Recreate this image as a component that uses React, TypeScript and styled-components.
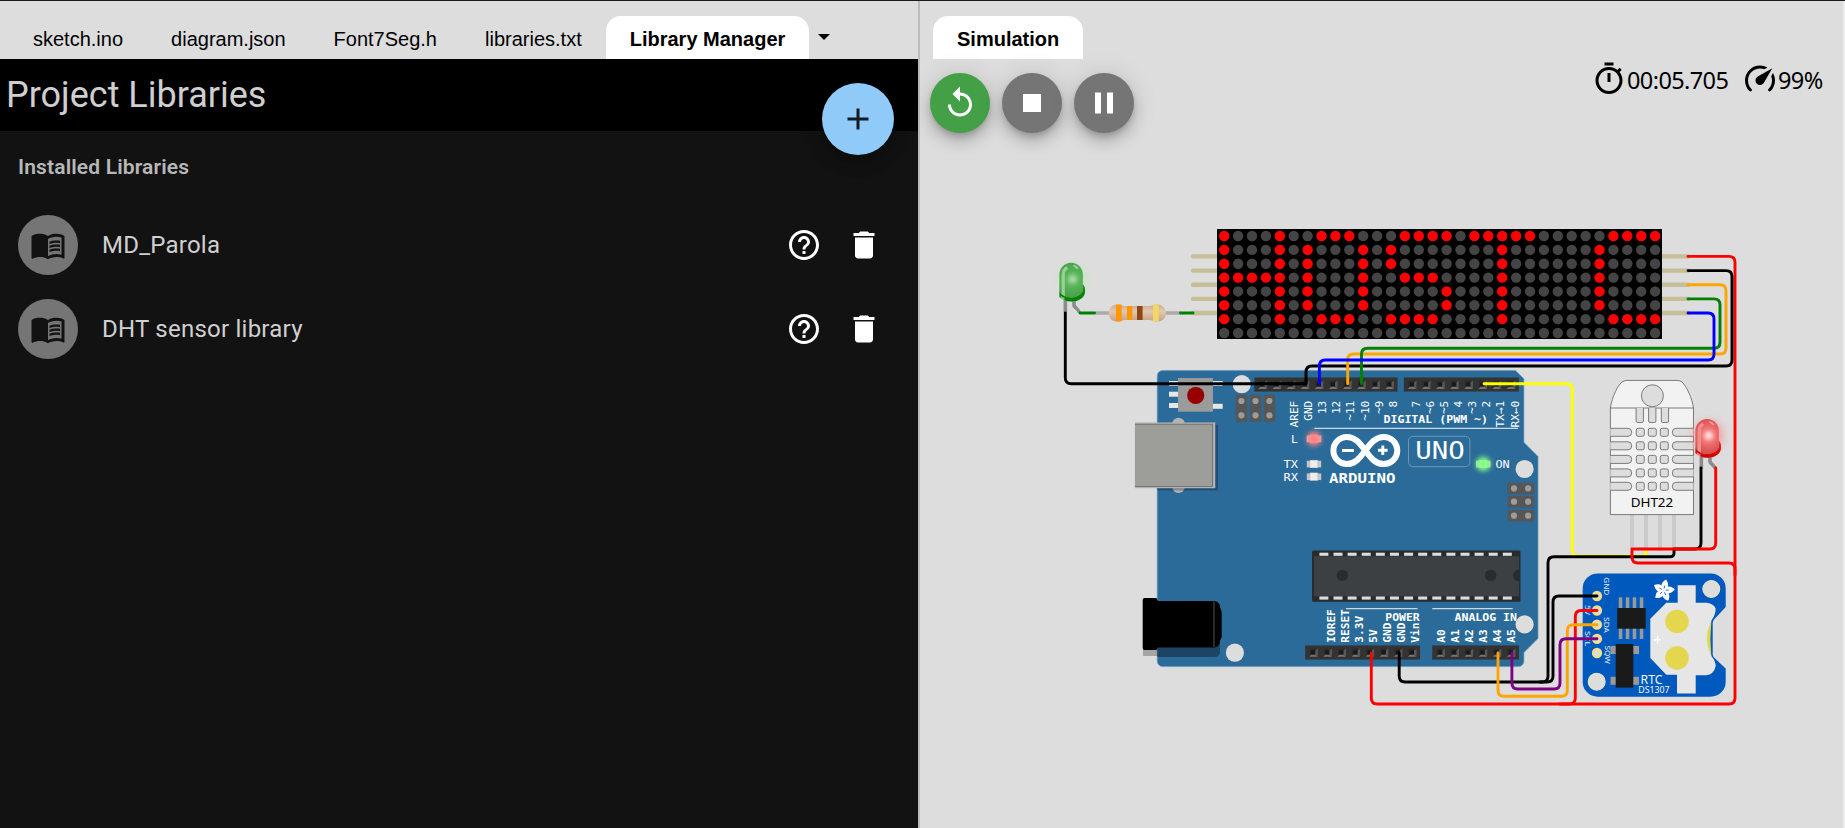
import React from 'react';
import styled, { createGlobalStyle } from 'styled-components';

const GlobalStyle = createGlobalStyle`
  * { box-sizing: border-box; }
  html, body { margin: 0; padding: 0; overflow: hidden; background: #ddd; }
`;

const Page = styled.div`
  display: flex;
  width: 1845px;
  height: 828px;
  border-top: 1px solid #1c181c;
  background: #ddd;
  overflow: hidden;
`;

const EditorPane = styled.section`
  display: flex;
  flex-direction: column;
  flex: 0 0 918px;
`;

const Divider = styled.div`
  flex: 0 0 2px;
  background: #bcbcbc;
`;

const SimulationPane = styled.section`
  display: flex;
  flex-direction: column;
  flex: 0 0 923px;
`;

const EdgeStrip = styled.div`
  flex: 1;
  background: #ececec;
`;

const TabBar = styled.nav<{ $inset: number }>`
  display: flex;
  align-items: flex-end;
  height: 58px;
  flex: none;
  padding-left: ${(p) => p.$inset}px;
  background: #ddd;
`;

const Tab = styled.div<{ $active?: boolean }>`
  height: 43px;
  padding: 0 24px;
  border-radius: 15px 15px 0 0;
  font: ${(p) => (p.$active ? 700 : 400)} 20px/46px 'Liberation Sans', Arial, sans-serif;
  color: #000;
  background: ${(p) => (p.$active ? '#fff' : 'transparent')};
  white-space: nowrap;
`;

const TabMenuArrow = styled.span`
  width: 0;
  height: 0;
  margin: 0 0 19px 9px;
  border: 6.5px solid transparent;
  border-top-color: #000;
  border-bottom: 0;
`;

const LibraryPanel = styled.div`
  flex: 1;
  display: flex;
  flex-direction: column;
  background: #121212;
  font-family: Roboto, sans-serif;
`;

const LibraryHeader = styled.header`
  display: flex;
  justify-content: space-between;
  height: 72px;
  padding: 0 24px 0 6px;
  background: #000;
`;

const LibraryTitle = styled.h1`
  margin: 0;
  font-weight: 400;
  font-size: 36px;
  line-height: 72px;
  color: #cfcfcf;
`;

const RoundButton = styled.button<{ $size: number; $color: string }>`
  display: flex;
  align-items: center;
  justify-content: center;
  flex: none;
  width: ${(p) => p.$size}px;
  height: ${(p) => p.$size}px;
  padding: 0;
  border: 0;
  border-radius: 50%;
  background: ${(p) => p.$color};
  color: #fff;
  box-shadow: 0 4.5px 7.5px -1.5px rgba(0, 0, 0, 0.2), 0 9px 15px rgba(0, 0, 0, 0.14),
    0 1.5px 27px rgba(0, 0, 0, 0.12);
`;

const AddButton = styled(RoundButton)`
  margin-top: 24px;
  color: rgba(0, 0, 0, 0.87);
`;

const Subheader = styled.h2`
  margin: 0;
  padding: 0 18px;
  font-weight: 600;
  font-size: 21px;
  line-height: 72px;
  letter-spacing: 0.15px;
  color: #b8b8b8;
`;

const LibraryRow = styled.div`
  display: flex;
  align-items: center;
  height: 84px;
  padding: 0 36px 0 18px;
`;

const Avatar = styled.div`
  display: flex;
  align-items: center;
  justify-content: center;
  width: 60px;
  height: 60px;
  border-radius: 50%;
  background: #757575;
  color: #121212;
`;

const LibraryName = styled.div`
  flex: 1;
  margin-left: 24px;
  font-size: 24px;
  letter-spacing: 0.24px;
  color: #d0d0d0;
`;

const RowActions = styled.div`
  display: flex;
  gap: 24px;
  color: #fff;
`;

const Toolbar = styled.div`
  display: flex;
  justify-content: space-between;
  height: 101px;
  flex: none;
  padding: 14px 19px 0 10px;
`;

const ControlGroup = styled.div`
  display: flex;
  gap: 12px;
`;

const Readout = styled.div`
  display: flex;
  height: 36px;
  margin-top: -12px;
  font: 400 23.5px/39px 'Noto Sans', sans-serif;
  letter-spacing: -0.6px;
  color: #000;
`;

const ReadoutItem = styled.div<{ $width: number }>`
  display: flex;
  width: ${(p) => p.$width}px;
  white-space: nowrap;
`;

const Icon = ({ d, size = 36 }: { d: string; size?: number }) => (
  <svg width={size} height={size} viewBox="0 0 24 24" fill="currentColor" style={{ flex: 'none' }}>
    <path d={d} />
  </svg>
);

const ICONS = {
  add: 'M19 13h-6v6h-2v-6H5v-2h6V5h2v6h6v2z',
  help: 'M11 18h2v-2h-2v2zm1-16C6.48 2 2 6.48 2 12s4.48 10 10 10 10-4.48 10-10S17.52 2 12 2zm0 18c-4.41 0-8-3.59-8-8s3.59-8 8-8 8 3.59 8 8-3.59 8-8 8zm0-14c-2.21 0-4 1.79-4 4h2c0-1.1.9-2 2-2s2 .9 2 2c0 2-3 1.75-3 5h2c0-2.25 3-2.5 3-5 0-2.21-1.79-4-4-4z',
  trash: 'M6 19c0 1.1.9 2 2 2h8c1.1 0 2-.9 2-2V7H6v12zM19 4h-3.5l-1-1h-5l-1 1H5v2h14V4z',
  replay: 'M12 5V1L7 6l5 5V7c3.31 0 6 2.69 6 6s-2.69 6-6 6-6-2.69-6-6H4c0 4.42 3.58 8 8 8s8-3.58 8-8-3.58-8-8-8z',
  stop: 'M6 6h12v12H6z',
  pause: 'M6 19h4V5H6v14zm8-14v14h4V5h-4z',
  timer: 'M15 1H9v2h6V1zm-4 13h2V8h-2v6zm8.03-6.61l1.42-1.42c-.43-.51-.9-.99-1.41-1.41l-1.42 1.42C16.07 4.74 14.12 4 12 4c-4.97 0-9 4.03-9 9s4.02 9 9 9 9-4.03 9-9c0-2.12-.74-4.07-1.97-5.61zM12 20c-3.87 0-7-3.13-7-7s3.13-7 7-7 7 3.13 7 7-3.13 7-7 7z',
  gauge:
    'M12,16A3,3 0 0,1 9,13C9,11.88 9.61,10.9 10.5,10.39L20.21,4.77L14.68,14.35C14.18,15.33 13.17,16 12,16M12,3C13.81,3 15.5,3.5 16.97,4.32L14.87,5.53C14,5.19 13,5 12,5A8,8 0 0,0 4,13C4,15.21 4.89,17.21 6.34,18.65H6.35C6.74,19.04 6.74,19.67 6.35,20.06C5.96,20.45 5.32,20.45 4.93,20.07V20.07C3.12,18.26 2,15.76 2,13A10,10 0 0,1 12,3M22,13C22,15.76 20.88,18.26 19.07,20.07V20.07C18.68,20.45 18.05,20.45 17.66,20.06C17.27,19.67 17.27,19.04 17.66,18.65V18.65C19.11,17.2 20,15.21 20,13C20,12 19.81,11 19.46,10.1L20.67,8C21.5,9.5 22,11.18 22,13Z',
  book1:
    'M21 5c-1.11-.35-2.33-.5-3.5-.5-1.95 0-4.05.4-5.5 1.5-1.45-1.1-3.55-1.5-5.5-1.5S2.45 4.9 1 6v14.65c0 .25.25.5.5.5.1 0 .15-.05.25-.05C3.1 20.45 5.05 20 6.5 20c1.95 0 4.05.4 5.5 1.5 1.35-.85 3.8-1.5 5.5-1.5 1.65 0 3.35.3 4.75 1.05.1.05.15.05.25.05.25 0 .5-.25.5-.5V6c-.6-.45-1.25-.75-2-1zm0 13.5c-1.1-.35-2.3-.5-3.5-.5-1.7 0-4.15.65-5.5 1.5V8c1.35-.85 3.8-1.5 5.5-1.5 1.2 0 2.4.15 3.5.5v11.5z',
  book2:
    'M17.5 10.5c.88 0 1.73.09 2.5.26V9.24c-.79-.15-1.64-.24-2.5-.24-1.7 0-3.24.29-4.5.83v1.66c1.13-.64 2.7-.99 4.5-.99zM13 12.49v1.66c1.13-.64 2.7-.99 4.5-.99.88 0 1.73.09 2.5.26V11.9c-.79-.15-1.64-.24-2.5-.24-1.7 0-3.24.3-4.5.83zM17.5 14.33c-1.7 0-3.24.29-4.5.83v1.66c1.13-.64 2.7-.99 4.5-.99.88 0 1.73.09 2.5.26v-1.52c-.79-.16-1.64-.24-2.5-.24z',
};

/* ---------- circuit drawing ---------- */

const MONO = "'DejaVu Sans Mono', monospace";

type LabelProps = {
  x: number;
  y: number;
  w: number;
  size: number;
  children: string;
  bold?: boolean;
  family?: string;
  fill?: string;
};

const Label = ({ x, y, w, size, children, bold, family = MONO, fill = '#fff' }: LabelProps) => (
  <text x={x} y={y} textLength={w} lengthAdjust="spacingAndGlyphs" fontSize={size} fontWeight={bold ? 700 : 400} fontFamily={family} fill={fill}>
    {children}
  </text>
);

/* Text running upwards; `x` is the baseline and `y` the lower end. */
const UpLabel = ({ x, y, w, size, children, bold }: LabelProps) => (
  <g transform={`translate(${x} ${y}) rotate(-90)`}>
    <Label x={0} y={0} w={w} size={size} bold={bold}>
      {children}
    </Label>
  </g>
);

const wirePath = (pts: number[][], r = 6) => {
  let d = `M${pts[0][0]} ${pts[0][1]}`;
  for (let i = 1; i < pts.length - 1; i++) {
    const [px, py] = pts[i - 1];
    const [x, y] = pts[i];
    const [nx, ny] = pts[i + 1];
    const l1 = Math.hypot(x - px, y - py);
    const l2 = Math.hypot(nx - x, ny - y);
    const k = Math.min(r, l1 / 2, l2 / 2);
    d += `L${x - ((x - px) / l1) * k} ${y - ((y - py) / l1) * k}Q${x} ${y} ${x + ((nx - x) / l2) * k} ${y + ((ny - y) / l2) * k}`;
  }
  const last = pts[pts.length - 1];
  return `${d}L${last[0]} ${last[1]}`;
};

const Wire = ({ color, pts }: { color: string; pts: number[][] }) => (
  <path d={wirePath(pts)} fill="none" stroke={color} strokeWidth={2.9} strokeLinecap="round" />
);

const MATRIX_ROWS = [
  '#...#..###...####.#####.....####',
  '#...#.#...#.#.......#......#....',
  '#...#.#...#.#.......#......#....',
  '#####.#...#..###....#......#....',
  '#...#.#...#.....#...#......#....',
  '#...#.#...#.....#...#......#....',
  '#...#..###..####....#.......####',
  '................................',
];

const PIN_ROWS = [256.4, 270.6, 284.7, 298.9, 313];

const LedMatrix = () => (
  <g>
    {PIN_ROWS.map((y) => (
      <g key={y} stroke="#c6be96" strokeWidth={4.4} strokeLinecap="round">
        <path d={`M1193 ${y}H1217M1662 ${y}H1688`} />
      </g>
    ))}
    <rect x={1217} y={229} width={445} height={110} fill="#000" />
    {MATRIX_ROWS.map((row, r) =>
      row.split('').map((c, i) => (
        <circle key={`${r}-${i}`} cx={1224.2 + i * 13.9} cy={236 + r * 13.86} r={5.2} fill={c === '#' ? '#f00' : '#444'} />
      )),
    )}
  </g>
);

type LedProps = { x: number; y: number; color: string; glow: string; halo: number; core: number };

const Led = ({ x, y, color, glow, halo, core }: LedProps) => (
  <g transform={`translate(${x} ${y}) scale(1.655)`}>
    <rect x="2.51" y="20.38" width="2.15" height="9.83" fill="#8c8c8c" />
    <path d="m12.977 30.269c0-1.1736-0.86844-2.5132-1.8916-3.4024-0.41616-0.3672-1.1995-1.0015-1.1995-1.4249v-5.4706h-2.1614v5.7802c0 1.0584 0.94752 1.8785 1.9462 2.7482 0.44424 0.37584 1.3486 1.2496 1.3486 1.7694z" fill="#8c8c8c" />
    <path d="m14.173 13.001v-5.9126c0-3.9132-3.168-7.0884-7.0855-7.0884-3.9125 0-7.0877 3.1694-7.0877 7.0884v13.649c1.4738 1.651 4.0968 2.7526 7.0877 2.7526 4.6195 0 8.3686-2.6179 8.3686-5.8594v-1.5235c-7.4e-4-1.1426-0.47444-2.2039-1.283-3.1061z" fill="#d1d1d1" />
    <path d="m14.173 13.001v3.1054c0 2.7389-3.1658 4.9651-7.0855 4.9651-3.9125 0-7.0877-2.219-7.0877-4.9651v4.6296c1.4738 1.6517 4.0968 2.7526 7.0877 2.7526 4.6195 0 8.3686-2.6179 8.3686-5.8586v-1.5235c-7e-4-1.1419-0.4744-2.2032-1.283-3.1054z" fill={color} />
    <path d="m7.0877 0c-3.9125 0-7.0877 3.1694-7.0877 7.0884v9.018c0 2.746 3.175 4.965 7.0877 4.965 3.92 0 7.0855-2.226 7.0855-4.965v-9.018c0-3.9132-3.168-7.0884-7.0855-7.0884z" fill={color} opacity=".65" />
    <path d="m10.388 3.7541 1.4364-0.2736c-0.84168-1.1318-2.0822-1.9577-3.5417-2.2385l0.25416 1.0807c0.76388 0.27072 1.4068 0.78048 1.8511 1.4314z" fill="#fff" opacity=".5" />
    <path d="m0.76824 19.926v1.5199c0.64872 0.5292 1.4335 0.97632 2.3076 1.3169v-1.525c-0.8784-0.33624-1.6567-0.78194-2.3076-1.3118z" fill="#fff" opacity=".5" />
    <path d="M3.3 20.2V7c0-1.5.85-2.7 2.07-3.35l-1.27-1.56C2.4 3.1 1.3 4.9 1.3 7v11.9z" fill="#fff" opacity=".45" />
    <ellipse cx="8" cy="10" rx="8.6" ry="8.6" fill={glow} filter="url(#ledGlow)" opacity={halo} />
    <ellipse cx="8" cy="10" rx="2.6" ry="2.6" fill="#fff" filter="url(#ledCore)" opacity={core} />
  </g>
);

const Resistor = () => (
  <g>
    <path d="M1095 313H1181" stroke="#aaa" strokeWidth={3.6} />
    <path d="M1117.5 304.4C1112 304.4 1108.8 308 1108.8 313S1112 321.6 1117.5 321.6C1121 321.6 1122 320 1126 320H1149C1152.5 320 1153.5 321.6 1157 321.6C1162.5 321.6 1166 318 1166 313S1162.5 304.4 1157 304.4C1153.5 304.4 1152.5 306 1149 306H1126C1122 306 1121 304.4 1117.5 304.4Z" fill="url(#resistorBody)" />
    <rect x={1116} y={304.6} width={5.6} height={16.8} fill="#ff9800" />
    <rect x={1127} y={306} width={5.3} height={14} fill="#ff9800" />
    <rect x={1137} y={306} width={5.6} height={14} fill="#8d4614" />
    <rect x={1153} y={304.6} width={5.8} height={16.8} fill="#f1d863" />
  </g>
);

const BoardLed = ({ cx, cy, glow }: { cx: number; cy: number; glow?: string }) => (
  <g>
    <rect x={cx - 7.2} y={cy - 3.3} width={14.4} height={6.7} fill="#c6c6c6" />
    <rect x={cx - 4} y={cy - 3.9} width={7.8} height={7.8} fill="#eee" stroke="#aaa" strokeWidth={0.3} />
    {glow && <circle cx={cx} cy={cy} r={7.2} fill={glow} filter="url(#boardGlow)" />}
  </g>
);

const TOP_LABELS: [string, number][] = [
  ['AREF', 1294.3], ['GND', 1308.3], ['13', 1322.3], ['12', 1336.4], ['~11', 1350.5], ['~10', 1365],
  ['~9', 1379.2], ['8', 1393], ['7', 1415.9], ['~6', 1430.2], ['~5', 1444.3], ['4', 1458], ['~3', 1472.3],
  ['2', 1486], ['TX→1', 1500.3], ['RX←0', 1514.6],
];

const BOTTOM_LABELS: [string, number][] = [
  ['IOREF', 1331], ['RESET', 1345], ['3.3V', 1359], ['5V', 1373.2], ['GND', 1387], ['GND', 1401], ['Vin', 1414.8],
  ['A0', 1441], ['A1', 1455], ['A2', 1469], ['A3', 1483], ['A4', 1497], ['A5', 1511],
];

const PinHeader = ({ x, y, pins }: { x: number; y: number; pins: number }) => (
  <g transform={`translate(${x} ${y})`}>
    <rect width={0.38 + 2.54 * pins} height={2.54} fill="#333" />
    {Array.from({ length: pins }, (_, i) => (
      <g key={i} transform={`translate(${i * 2.54} 0)`}>
        <rect x={0.83} y={0.6} width={1.27} height={1.35} fill="#2b2b2b" />
        <rect x={1.079} y={0.896} width={0.762} height={0.762} fill="#191919" />
        <path d="M1.079 1.658l-.35.4h1.55l-.437-.4z" fill="#747474" />
        <path d="M1.841 .896l.437-.35v1.512l-.437-.4z" fill="#595959" />
      </g>
    ))}
  </g>
);

const ArduinoUno = () => (
  <g>
    <g transform="translate(1157.2 370.4) scale(5.553)">
      <path d="M1 0A1 1 0 0 0 0 1V52.34A1 1 0 0 0 1 53.34H65.04A1 1 0 0 0 66.04 52.34V50.8L68.58 48.26V15.49L66.04 12.95V1.524L64.516 0Z" fill="#2b6b99" stroke="#6d9cbd" strokeWidth={0.12} />
      <PinHeader x={17.497} y={1.27} pins={10} />
      <PinHeader x={44.421} y={1.27} pins={8} />
      <PinHeader x={26.641} y={49.53} pins={8} />
      <PinHeader x={49.53} y={49.53} pins={6} />
      <g fill="#b3b2b2">
        <ellipse cx="3.84" cy="9.56" rx="1.12" ry="1.03" />
        <ellipse cx="3.84" cy="21.04" rx="1.12" ry="1.03" />
        <rect width="11" height="11.93" x="-.05" y="9.72" rx=".2" fill="#000" opacity=".24" />
        <rect x="-4" y="9.37" height="11.85" width="14.46" />
        <rect x="-4" y="9.61" height="11.37" width="14.05" fill="#706f6f" />
        <rect x="-4" y="9.77" height="11.05" width="13.89" fill="#9d9d9a" />
      </g>
    </g>

    <g fill="#ddd">
      <circle cx={1241.8} cy={384.2} r={9.1} />
      <circle cx={1234.9} cy={652.7} r={9.1} />
      <circle cx={1524.6} cy={469} r={9.1} />
    </g>

    <g fill="#e6e6e6">
      <rect x={1169} y={381} width={9.5} height={5} />
      <rect x={1169} y={391.7} width={9.5} height={5} />
      <rect x={1169} y={403} width={9.5} height={5} />
      <rect x={1213} y={381} width={9.7} height={5} />
      <rect x={1213} y={403.8} width={9.7} height={5} />
    </g>
    <rect x={1178} y={378} width={35} height={33.7} fill="#9b9b9b" />
    <circle cx={1195.7} cy={395.4} r={8.6} fill="#960000" />

    <g fill="#000">
      <rect x={1143} y={604} width={15} height={52} opacity={0.25} />
      <path d="M1157.5 604H1220V653Q1219 657 1214 657H1157.5Z" opacity={0.35} />
      <path d="M1144.5 598H1156.5L1158 601H1213C1217.5 601 1219.5 603 1220 607L1221.7 612V637L1220 641C1219.5 645.5 1217.5 647.5 1213 647.5H1158L1156.5 650H1144.5Q1142.7 650 1142.7 648V600Q1142.7 598 1144.5 598Z" />
      <path d="M1214 601.5V647" stroke="#3c3c3c" strokeWidth={1.4} />
    </g>

    {[1235.7, 1249.8, 1263.7].map((x) => (
      <g key={x}>
        <rect x={x} y={394.8} width={11.5} height={27} fill="#565656" />
        <circle cx={x + 5.7} cy={401} r={3.1} fill="#9c9c9c" />
        <circle cx={x + 5.7} cy={415.3} r={3.1} fill="#9c9c9c" />
      </g>
    ))}
    {[482.7, 496, 510].map((y) => (
      <g key={y}>
        <rect x={1507.7} y={y} width={26.6} height={11.5} fill="#565656" />
        <circle cx={1514} cy={y + 5.7} r={3.1} fill="#9c9c9c" />
        <circle cx={1528.1} cy={y + 5.7} r={3.1} fill="#9c9c9c" />
      </g>
    ))}

    <rect x={1312} y={550.4} width={208.5} height={51.3} rx={1.5} fill="#292c2d" />
    <rect x={1314} y={556.3} width={205} height={39.9} fill="#3c4042" />
    {Array.from({ length: 14 }, (_, i) => (
      <g key={i} fill="#ddd">
        <rect x={1319.4 + i * 14.11} y={552.7} width={9} height={3.1} />
        <rect x={1319.4 + i * 14.11} y={596.5} width={9} height={3.1} />
      </g>
    ))}
    <g fill="#292c2d">
      <circle cx={1342.3} cy={575.4} r={5.7} />
      <circle cx={1490.7} cy={575.4} r={5.7} />
      <path d="M1519 569.4A6 6 0 0 0 1519 581.4Z" />
    </g>

    <BoardLed cx={1314} cy={438.8} glow="#ff8080" />
    <BoardLed cx={1314} cy={464} />
    <BoardLed cx={1314} cy={476.7} />
    <BoardLed cx={1483.3} cy={464} glow="#80ff80" />

    {TOP_LABELS.map(([t, x]) => (
      <UpLabel key={t} x={x + 3.9} y={400.7 + t.length * 6.7} w={t.length * 6.7} size={10.8}>
        {t}
      </UpLabel>
    ))}
    {BOTTOM_LABELS.map(([t, x]) => (
      <UpLabel key={x} x={x + 3.9} y={642.7} w={t.length * 6.7} size={10.6} bold>
        {t}
      </UpLabel>
    ))}
    <Label x={1383.5} y={423.2} w={104.5} size={10} bold>DIGITAL (PWM ~)</Label>
    <Label x={1385.3} y={621.4} w={34.4} size={10} bold>POWER</Label>
    <Label x={1454.5} y={621.4} w={62.5} size={10} bold>ANALOG IN</Label>
    <Label x={1291} y={443.2} w={6.8} size={9.8}>L</Label>
    <Label x={1283.5} y={468.2} w={14.5} size={9.8}>TX</Label>
    <Label x={1283.5} y={481.2} w={14.5} size={9.8}>RX</Label>
    <Label x={1495.5} y={468.2} w={14.2} size={9.8}>ON</Label>
    <g stroke="#c9dae6" strokeWidth={1.2}>
      <path d="M1314.3 428.4H1518M1346 608.7H1417.5M1432.3 608.7H1512.7" />
    </g>
    <rect x={1408.5} y={436.3} width={61.4} height={30.4} rx={4.5} fill="none" stroke="#6b98b8" strokeWidth={1} />
    <Label x={1415.2} y={459} w={49.5} size={25.2}>UNO</Label>
    <Label x={1329} y={483} w={66.5} size={13.3} bold>ARDUINO</Label>

    <path
      d="M1365.3 450.5C1359.8 443 1355 436.900 1347 436.9A13.6 13.6 0 0 0 1347 464.1C1355 464.1 1359.8 458 1365.3 450.5C1370.800 443 1375.5 436.9 1383.7 436.9A13.6 13.6 0 0 1 1383.7 464.1C1375.5 464.1 1370.8 458 1365.3 450.5Z"
      fill="none" stroke="#fff" strokeWidth={6}
    />
    <path d="M1342 450.5H1354M1378 450.3H1387.6M1382.8 445.5V455.1" stroke="#fff" strokeWidth={2.9} />
    <circle cx={1524.6} cy={624.4} r={9.1} fill="#ddd" />
  </g>
);

const Dht22 = () => (
  <g>
    {[1632, 1646, 1660, 1674].map((x) => (
      <rect key={x} x={x - 2} y={514} width={4} height={37} fill="#cbcbcb" />
    ))}
    <g fill="#f2f2f2" stroke="#5f5f5f" strokeWidth={0.8}>
      <path d="M1610.4 514.6V408C1612 397 1618 384 1623 381.5Q1625 380.4 1627 380.4H1677Q1680 380.4 1682 382C1687 387 1692 398 1693.5 408V514.6Z" />
      <path d="M1610.4 408H1693.5" />
      <g fill="#ddd">
        <circle cx={1652.4} cy={395.8} r={11} />
        {[1636.1, 1648.6, 1661.3].map((x) => (
          <path key={x} d={`M${x} 408V421Q${x} 422.5 ${x + 1.5} 422.5H${x + 5.8}Q${x + 7.3} 422.5 ${x + 7.3} 421V408`} />
        ))}
        {[432.3, 445.8, 459.4, 472.9, 486.3].map((y) => (
          <g key={y}>
            <path d={`M1610.4 ${y - 4}H1628Q1631.7 ${y - 4} 1631.7 ${y}T1628 ${y + 4}H1610.4`} />
            <path d={`M1693.5 ${y - 4}H1676Q1672.3 ${y - 4} 1672.3 ${y}T1676 ${y + 4}H1693.5`} />
            {[1636.3, 1648.3, 1660.3].map((x) => (
              <rect key={x} x={x} y={y - 4} width={8} height={8} rx={1.8} />
            ))}
          </g>
        ))}
      </g>
    </g>
    <Label x={1630.7} y={507} w={42.5} size={12.8} family="'Noto Sans', sans-serif" fill="#000">DHT22</Label>
  </g>
);

const RTC_PADS = [596, 610.5, 624.7, 638.8, 653];

const RTC_LABELS: [string, number, number, number][] = [
  ['GND', 1604, 577.3, 18], ['5V', 1585.3, 605, 10], ['SDA', 1604, 617, 16], ['SCL', 1585.3, 631, 15], ['SQW', 1604.5, 645.5, 18.5],
];

const RtcModule = () => (
  <g>
    <path d="M1597.7 573.4H1710.7A15 15 0 0 1 1725.7 588.4V607L1714 619.5Q1712.7 621 1712.7 623V654Q1712.7 656 1714 657.5L1725.7 668.5V681.7A15 15 0 0 1 1710.7 696.7H1597.7A15 15 0 0 1 1582.7 681.7V588.4A15 15 0 0 1 1597.7 573.4Z" fill="#005abd" />
    <path d="M1677.7 585.3H1695.7V602.7H1706.7Q1714 604 1715.7 608.5Q1715.5 615 1711.7 620Q1709.5 625 1710 638.5Q1709.5 652 1711.7 656.5Q1715.5 661 1715.7 666Q1714 674.5 1706 675.3H1695.7V693.4H1677V674.7H1666.3L1650.3 658V618.7L1666.3 602.7H1677.7Z" fill="#e6e6e6" />
    <path d="M1711.3 621.5Q1702.5 638.5 1711.3 655.5Q1709.5 638.5 1711.3 621.5Z" fill="#e5d64f" />
    <circle cx={1677} cy={621.5} r={11.8} fill="#e5d64f" />
    <circle cx={1677} cy={658} r={11.8} fill="#e5d64f" />
    <path d="M1654 639.7H1661M1657.5 636.2V643.2" stroke="#fff" strokeWidth={1.4} />
    <g fill="#ddd" stroke="#e6e4c4" strokeWidth={1.2}>
      <circle cx={1711.3} cy={589} r={8.4} />
      <circle cx={1596.7} cy={681.7} r={8.4} />
    </g>
    <g transform="translate(1663.7 590.5)" fill="#fff">
      {[12, 84, 156, 228, 300].map((a) => (
        <path key={a} d="M0 0C-4.5 -3 -4.5 -7 0 -11.2C4.5 -7 4.5 -3 0 0Z" transform={`rotate(${a})`} />
      ))}
      {[12, 84, 156, 228, 300].map((a) => (
        <path key={a} d="M0 -2V-5" stroke="#005abd" strokeWidth={0.8} transform={`rotate(${a})`} />
      ))}
    </g>
    <g fill="#999">
      {[1618.8, 1625.8, 1632.7, 1639.8].map((x) => (
        <rect key={x} x={x} y={597.3} width={3.5} height={41.7} />
      ))}
      <rect x={1610.5} y={646} width={28.5} height={8} />
      <rect x={1610.5} y={676.8} width={28.5} height={8} />
    </g>
    <rect x={1617.2} y={608} width={28.5} height={20.7} fill="#1a1a1a" />
    <rect x={1615.7} y={644} width={17.6} height={43.6} fill="#1a1a1a" />
    {RTC_LABELS.map(([t, x, y, w]) => (
      <g key={t} transform={`translate(${x} ${y}) rotate(90)`}>
        <Label x={0} y={0} w={w} size={7.6} family="'Noto Sans', sans-serif" fill="#e4ecf7">
          {t}
        </Label>
      </g>
    ))}
    {RTC_PADS.map((y) => (
      <circle key={y} cx={1597} cy={y} r={3.9} fill="#ddd" stroke="#f2df8c" strokeWidth={2.5} />
    ))}
    <Label x={1640.5} y={683.8} w={22} size={12.6} family="'Noto Sans', sans-serif" fill="#f2f6fc">RTC</Label>
    <Label x={1638.3} y={692.9} w={31.3} size={8.5} family="'Noto Sans', sans-serif" fill="#f2f6fc">DS1307</Label>
  </g>
);

const Wires = () => (
  <g>
    <Wire color="#008000" pts={[[1080, 313], [1094.5, 313]]} />
    <Wire color="#008000" pts={[[1180.5, 313], [1193, 313]]} />
    <Wire color="#f00" pts={[[1688, 256.4], [1735, 256.4], [1735, 704], [1371.3, 704], [1371.3, 653]]} />
    <Wire color="#000" pts={[[1688, 270.6], [1732, 270.6], [1732, 366], [1306, 366], [1306, 383.7]]} />
    <Wire color="#ffa500" pts={[[1688, 284.7], [1726, 284.7], [1726, 354], [1347.7, 354], [1347.7, 383.7]]} />
    <Wire color="#008000" pts={[[1688, 298.9], [1720, 298.9], [1720, 348.3], [1361.5, 348.3], [1361.5, 383.7]]} />
    <Wire color="#00f" pts={[[1688, 313], [1714, 313], [1714, 360], [1319.4, 360], [1319.4, 383.7]]} />
    <Wire color="#000" pts={[[1065.3, 313], [1065.3, 383.7], [1306, 383.7]]} />
    <Wire color="#ff0" pts={[[1484, 383.7], [1572.3, 383.7], [1572.3, 556.2], [1646, 556.2], [1646, 550.5]]} />
    <Wire color="#000" pts={[[1701, 468], [1701, 549], [1674, 549]]} />
    <Wire color="#000" pts={[[1674, 550], [1674, 556.7], [1548, 556.7], [1548, 682], [1399.2, 682], [1399.2, 653]]} />
    <Wire color="#f00" pts={[[1715.7, 468], [1715.7, 549], [1634, 549]]} />
    <Wire color="#f00" pts={[[1632, 549], [1632, 563], [1735, 563], [1735, 575]]} />
    <Wire color="#000" pts={[[1597, 596], [1553, 596], [1553, 682], [1540, 682]]} />
    <Wire color="#f00" pts={[[1597, 610.5], [1575.3, 610.5], [1575.3, 704], [1560, 704]]} />
    <Wire color="#ffa500" pts={[[1597, 624.7], [1567.3, 624.7], [1567.3, 696.3], [1498, 696.3], [1498, 653]]} />
    <Wire color="#800080" pts={[[1597, 638.8], [1560, 638.8], [1560, 689], [1511.9, 689], [1511.9, 653]]} />
  </g>
);

const CircuitDiagram = () => (
  <svg width={923} height={668} viewBox="920 160 923 668" style={{ display: 'block' }}>
    <defs>
      <filter id="ledGlow" x="-100%" y="-100%" width="300%" height="300%">
        <feGaussianBlur stdDeviation="3" />
      </filter>
      <filter id="ledCore" x="-200%" y="-200%" width="500%" height="500%">
        <feGaussianBlur stdDeviation="1.6" />
      </filter>
      <filter id="boardGlow" x="-100%" y="-100%" width="300%" height="300%">
        <feGaussianBlur stdDeviation="2.4" />
      </filter>
      <linearGradient id="resistorBody" x1="0" y1="0" x2="0" y2="1">
        <stop offset="0" stopColor="#c9ab92" />
        <stop offset=".4" stopColor="#e2c8b0" />
        <stop offset="1" stopColor="#c4a186" />
      </linearGradient>
    </defs>
    <ArduinoUno />
    <LedMatrix />
    <Resistor />
    <Dht22 />
    <RtcModule />
    <Led x={1059.4} y={262.7} color="#008000" glow="#80ff80" halo={0.25} core={0.6} />
    <Led x={1695.4} y={419} color="#d00000" glow="#ff8080" halo={0.72} core={1} />
    <Wires />
  </svg>
);

/* ---------- page ---------- */

const FILES = ['sketch.ino', 'diagram.json', 'Font7Seg.h', 'libraries.txt'];
const LIBRARIES = ['MD_Parola', 'DHT sensor library'];

export default function App() {
  return (
    <>
      <GlobalStyle />
      <Page>
        <EditorPane>
          <TabBar $inset={9}>
            {FILES.map((f) => (
              <Tab key={f}>{f}</Tab>
            ))}
            <Tab $active>Library Manager</Tab>
            <TabMenuArrow />
          </TabBar>
          <LibraryPanel>
            <LibraryHeader>
              <LibraryTitle>Project Libraries</LibraryTitle>
              <AddButton $size={72} $color="#90caf9">
                <Icon d={ICONS.add} />
              </AddButton>
            </LibraryHeader>
            <Subheader>Installed Libraries</Subheader>
            {LIBRARIES.map((name) => (
              <LibraryRow key={name}>
                <Avatar>
                  <Icon d={ICONS.book1 + ICONS.book2} />
                </Avatar>
                <LibraryName>{name}</LibraryName>
                <RowActions>
                  <Icon d={ICONS.help} />
                  <Icon d={ICONS.trash} />
                </RowActions>
              </LibraryRow>
            ))}
          </LibraryPanel>
        </EditorPane>
        <Divider />
        <SimulationPane>
          <TabBar $inset={13}>
            <Tab $active>Simulation</Tab>
          </TabBar>
          <Toolbar>
            <ControlGroup>
              <RoundButton $size={60} $color="#43a047">
                <Icon d={ICONS.replay} />
              </RoundButton>
              <RoundButton $size={60} $color="#757575">
                <Icon d={ICONS.stop} />
              </RoundButton>
              <RoundButton $size={60} $color="#757575">
                <Icon d={ICONS.pause} />
              </RoundButton>
            </ControlGroup>
            <Readout>
              <ReadoutItem $width={151}>
                <Icon d={ICONS.timer} />
                00:05.705
              </ReadoutItem>
              <ReadoutItem $width={82}>
                <Icon d={ICONS.gauge} />
                99%
              </ReadoutItem>
            </Readout>
          </Toolbar>
          <CircuitDiagram />
        </SimulationPane>
        <EdgeStrip />
      </Page>
    </>
  );
}
